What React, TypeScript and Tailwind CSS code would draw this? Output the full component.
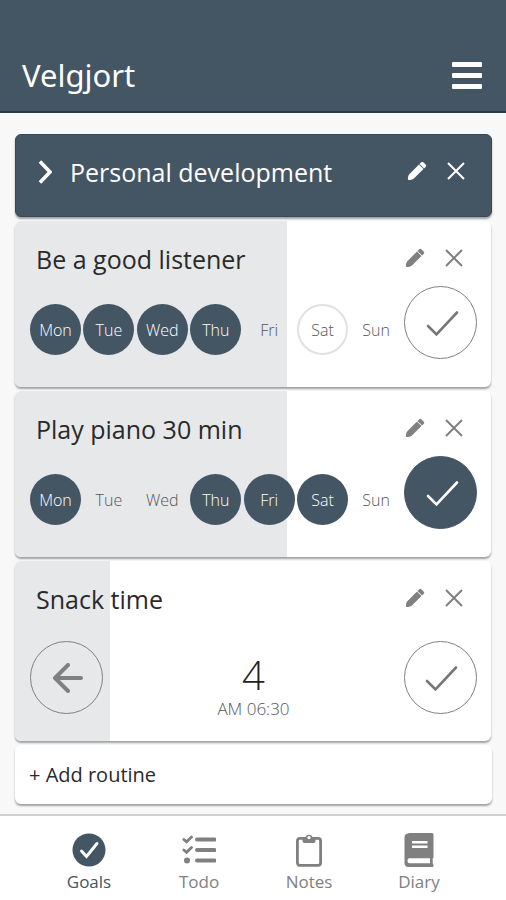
import React from 'react';
import clsx from 'clsx';

const DAYS = ['Mon', 'Tue', 'Wed', 'Thu', 'Fri', 'Sat', 'Sun'];

interface Routine {
  name: string;
  done: string[];
  today: string;
  checked: boolean;
}

const routines: Routine[] = [
  { name: 'Be a good listener', done: ['Mon', 'Tue', 'Wed', 'Thu'], today: 'Sat', checked: false },
  { name: 'Play piano 30 min', done: ['Mon', 'Thu', 'Fri', 'Sat'], today: 'Sat', checked: true },
];

const BarsIcon = () => (
  <svg viewBox="0 0 30 27" className="w-[30px] h-[27px]" fill="currentColor">
    <rect x="0" y="0" width="30" height="5" rx="1" />
    <rect x="0" y="11" width="30" height="5" rx="1" />
    <rect x="0" y="22" width="30" height="5" rx="1" />
  </svg>
);

const ChevronIcon = () => (
  <svg viewBox="0 0 14 24" className="w-[14px] h-6" fill="none" stroke="currentColor" strokeWidth="3.6">
    <path d="M2 1.500 12 12 2 22.500" />
  </svg>
);

const PencilIcon = () => (
  <svg viewBox="0 0 20 20" className="w-5 h-5" fill="currentColor">
    <path d="M14.2 1.2a1.500 1.500 0 0 1 2.100 0l2.500 2.500a1.500 1.500 0 0 1 0 2.100l-1.700 1.700-4.600-4.600z" />
    <path d="M12 3.500l4.500 4.500-9.600 9.500c-1 1-3.400 1.600-5.200 1.500-.5 0-.8-.3-.8-.8-.1-1.800.5-4.200 1.600-5.200z" />
  </svg>
);

const CrossIcon = () => (
  <svg viewBox="0 0 18 18" className="w-[18px] h-[18px]" fill="none" stroke="currentColor" strokeWidth="2">
    <path d="M1 1l16 16M17 1L1 17" />
  </svg>
);

const CheckIcon = () => (
  <svg viewBox="0 0 36 30" className="w-9 h-[30px]" fill="none" stroke="currentColor" strokeWidth="2.6" strokeLinecap="round">
    <path d="M5 18 13.500 26.500 34 4.500" />
  </svg>
);

const BackIcon = () => (
  <svg viewBox="0 0 32 30" className="w-8 h-[30px]" fill="none" stroke="currentColor" strokeWidth="4" strokeLinecap="round" strokeLinejoin="round">
    <path d="M17 2 4 15l13 13M4 15h26" />
  </svg>
);

const GoalsIcon = () => (
  <svg viewBox="0 0 34 34" className="w-[34px] h-[34px]">
    <circle cx="17" cy="17" r="16.500" fill="currentColor" />
    <path d="M9.500 18 14.500 23.500 25 10.500" fill="none" stroke="white" strokeWidth="3" strokeLinecap="round" />
  </svg>
);

const TodoIcon = () => (
  <svg viewBox="0 0 34 34" className="w-[34px] h-[34px]" fill="none" stroke="currentColor">
    <path d="M15 6.500h17.500M15 17h17.500M15 27.500h17.500" strokeWidth="4" strokeLinecap="round" />
    <path d="M1.800 6.500 4.600 8.800 9.500 4M1.800 17 4.600 19.300 9.500 14.500" strokeWidth="2.800" strokeLinecap="round" />
    <circle cx="5" cy="27.500" r="3" fill="currentColor" stroke="none" />
  </svg>
);

const NotesIcon = () => (
  <svg viewBox="0 0 26 34" className="w-[26px] h-[34px]" fill="none" stroke="currentColor">
    <rect x="1.400" y="5.400" width="23.200" height="27" rx="2.600" strokeWidth="2.800" />
    <path d="M6.500 4.500h3a3.600 3.600 0 0 1 7 0h3v3.600a2 2 0 0 1-2 2h-9a2 2 0 0 1-2-2z" fill="currentColor" stroke="none" />
    <circle cx="13" cy="4.600" r="1.600" fill="white" stroke="none" />
  </svg>
);

const DiaryIcon = () => (
  <svg viewBox="0 0 30 34" className="w-[30px] h-[34px]" fill="currentColor">
    <path d="M4.500 0h23.500a1.500 1.500 0 0 1 1.500 1.500v23l-.8 1v5l.8 1.200v1.300a1 1 0 0 1-1 1h-24a4 4 0 0 1-4-4v-25.500a4 4 0 0 1 4-4z" />
    <path d="M8 8h15.500v2.600H8zM8 12.400h15.500v2.600H8zM5.500 25.200h20.500v5h-20.500a2 2 0 0 1-2-2v-1a2 2 0 0 1 2-2z" fill="white" />
  </svg>
);

const CardActions: React.FC<{ name: string }> = ({ name }) => (
  <div className="flex items-center gap-5">
    <button type="button" aria-label={`Edit ${name}`}>
      <PencilIcon />
    </button>
    <button type="button" aria-label={`Remove ${name}`}>
      <CrossIcon />
    </button>
  </div>
);

interface CardProps {
  name: string;
  progress: number;
  children: React.ReactNode;
}

const Card: React.FC<CardProps> = ({ name, progress, children }) => (
  <section className="relative mr-px rounded-md bg-white overflow-hidden shadow-[0_2px_2px_rgba(0,0,0,0.35)]">
    <div className="absolute inset-y-0 left-0 bg-[#e6e8ea]" style={{ width: `${progress * 100}%` }} />
    <div className="relative">
      <div className="flex items-start justify-between pt-5 pl-[21px] pr-7 text-[#808080]">
        <h2 className="text-[25px] leading-9 text-[#2a2a2a]">{name}</h2>
        <div className="pt-[7px]">
          <CardActions name={name} />
        </div>
      </div>
      {children}
    </div>
  </section>
);

const CheckButton: React.FC<{ name: string; checked?: boolean }> = ({ name, checked }) => (
  <button
    type="button"
    aria-label={`Complete ${name}`}
    aria-pressed={!!checked}
    className={clsx(
      'shrink-0 w-[73px] h-[73px] rounded-full border flex items-center justify-center',
      checked ? 'bg-[#445564] border-[#445564] text-white' : 'border-[#808080] text-[#777]'
    )}
  >
    <CheckIcon />
  </button>
);

const WeekRow: React.FC<{ routine: Routine }> = ({ routine }) => (
  <div className="flex items-start pl-[15px] pr-[14px] pt-[9px] pb-7">
    <ul className="grid grid-cols-7 flex-1 pt-[18px]">
      {DAYS.map((day) => {
        const done = routine.done.includes(day);
        return (
          <li key={day}>
            <button
              type="button"
              aria-pressed={done}
              className={clsx(
                'w-[51px] h-[51px] rounded-full flex items-center justify-center text-base leading-6 font-light',
                done && 'bg-[#445564] text-white',
                !done && 'text-[#555]',
                !done && day === routine.today && 'border-2 border-[#dfe1e3]'
              )}
            >
              {day}
            </button>
          </li>
        );
      })}
    </ul>
    <CheckButton name={routine.name} checked={routine.checked} />
  </div>
);

const tabs = [
  { label: 'Goals', icon: <GoalsIcon />, active: true },
  { label: 'Todo', icon: <TodoIcon />, active: false },
  { label: 'Notes', icon: <NotesIcon />, active: false },
  { label: 'Diary', icon: <DiaryIcon />, active: false },
];

const App: React.FC = () => {
  return (
    <div className="min-h-screen flex flex-col bg-[#f8f8f8] font-['Open_Sans','Noto_Sans',sans-serif]">
      <header className="flex items-center justify-between bg-[#445564] border-b-2 border-[#243a4b] text-white pt-[50px] pb-[11px] pl-[22px] pr-6">
        <h1 className="font-['Noto_Sans',sans-serif] text-[31px] leading-[50px]">Velgjort</h1>
        <button type="button" aria-label="Menu">
          <BarsIcon />
        </button>
      </header>

      <main className="flex-1 flex flex-col gap-1 pt-[21px] pb-[9px] pl-[15px] pr-[14px]">
        {/* Goal header */}
        <div className="flex items-start justify-between rounded-md bg-[#445564] border border-[#344a5b] text-white pt-[19px] pb-[26px] pl-[22px] pr-[26px] shadow-[0_2px_2px_rgba(0,0,0,0.35)]">
          <div className="flex items-center gap-[18px]">
            <button type="button" aria-label="Expand goal">
              <ChevronIcon />
            </button>
            <h2 className="text-[25px] leading-9">Personal development</h2>
          </div>
          <div className="pt-[7px]">
            <CardActions name="Personal development" />
          </div>
        </div>

        {routines.map((routine) => (
          <Card key={routine.name} name={routine.name} progress={routine.done.length / DAYS.length}>
            <WeekRow routine={routine} />
          </Card>
        ))}

        <Card name="Snack time" progress={1 / 5}>
          <div className="flex items-start justify-between pl-[15px] pr-[14px] pt-6 pb-5">
            <button
              type="button"
              aria-label="Undo Snack time"
              className="shrink-0 w-[73px] h-[73px] rounded-full border border-[#808080] text-[#808080] flex items-center justify-center"
            >
              <BackIcon />
            </button>
            <div className="flex flex-col items-center pt-3">
              <span className="text-[40px] leading-[44px] font-light text-[#222]">4</span>
              <span className="text-[17px] leading-6 font-light text-[#555]">AM 06:30</span>
            </div>
            <CheckButton name="Snack time" />
          </div>
        </Card>

        <button
          type="button"
          className="rounded-md bg-white text-left text-[#2a2a2a] text-[20px] leading-7 px-[14px] pt-4 pb-[15px] shadow-[0_2px_2px_rgba(0,0,0,0.35)]"
        >
          + Add routine
        </button>
      </main>

      <nav className="grid grid-cols-4 bg-white border-t-2 border-[#d0d0d0] pl-[34px] pr-8 pt-[17px] pb-[6px]">
        {tabs.map((tab) => (
          <a
            key={tab.label}
            href={`#${tab.label.toLowerCase()}`}
            className={clsx('flex flex-col items-center gap-[3px]', tab.active ? 'text-[#445564]' : 'text-[#808080]')}
          >
            {tab.icon}
            <span className="text-[17px] leading-6">{tab.label}</span>
          </a>
        ))}
      </nav>
    </div>
  );
};

export default App;
